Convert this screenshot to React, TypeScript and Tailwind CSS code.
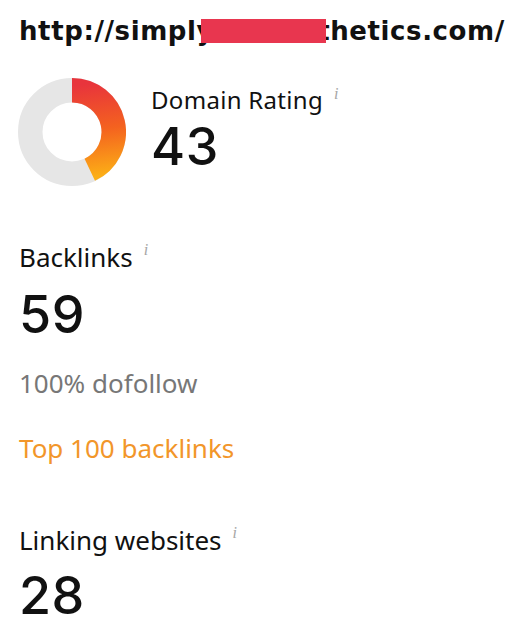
import React from "react";

const Info = () => (
  <span className="ml-[11px] align-top font-['Liberation_Serif',serif] text-[16px] italic leading-none text-[#a6a6a6]">
    i
  </span>
);

const Donut = ({ value }: { value: number }) => {
  const r = 41.75;
  const a = (value / 100) * Math.PI * 2;
  const x = 54 + r * Math.sin(a);
  const y = 54 - r * Math.cos(a);
  return (
    <svg className="-ml-px shrink-0" width="108" height="108" viewBox="0 0 108 108">
      <defs>
        <linearGradient id="dr" gradientUnits="userSpaceOnUse" x1="54" y1="8" x2="66" y2="100">
          <stop offset="0" stopColor="#e8343c" />
          <stop offset="0.5" stopColor="#f4621f" />
          <stop offset="1" stopColor="#fcae16" />
        </linearGradient>
      </defs>
      <circle cx="54" cy="54" r={r} fill="none" stroke="#e6e6e6" strokeWidth="24.5" />
      <path
        d={`M 54 ${54 - r} A ${r} ${r} 0 ${value > 50 ? 1 : 0} 1 ${x} ${y}`}
        fill="none"
        stroke="url(#dr)"
        strokeWidth="24.5"
      />
    </svg>
  );
};

const Big = ({ children, className }: { children: React.ReactNode; className: string }) => (
  <div className={`font-['Inter',sans-serif] text-[52px] font-medium leading-[52px] tracking-[0.5px] ${className}`}>
    {children}
  </div>
);

export default function App() {
  return (
    <div className="min-h-[633px] w-full bg-white pl-[19px] pt-4 font-['Noto_Sans',sans-serif] text-[#111]">
      <div className="flex items-center whitespace-nowrap font-['DejaVu_Sans',sans-serif] text-[26px] font-bold leading-[30px] tracking-[0.6px]">
        <span>http://simply</span>
        <span className="relative z-10 -ml-[13px] -mr-[9px] inline-block h-[24px] w-[125px] bg-[#e8364f]" />
        <span>thetics.com/</span>
      </div>

      <div className="mt-8 flex items-start">
        <Donut value={43} />
        <div className="ml-[25px] pt-2">
          <div className="whitespace-nowrap text-[24px] leading-[28px] tracking-[0.3px]">
            Domain Rating
            <Info />
          </div>
          <Big className="mt-[7px]">43</Big>
        </div>
      </div>

      <div className="mt-[56px] text-[26px] leading-[30px]">
        Backlinks
        <Info />
      </div>
      <Big className="mt-[17px]">59</Big>
      <div className="mt-[27px] text-[26px] leading-[30px] text-[#777]">100% dofollow</div>
      <div className="mt-[35px] text-[26px] leading-[30px] text-[#f2962a]">Top 100 backlinks</div>

      <div className="mt-[62px] text-[26px] leading-[30px]">
        Linking websites
        <Info />
      </div>
      <Big className="mt-[15px]">28</Big>
    </div>
  );
}
